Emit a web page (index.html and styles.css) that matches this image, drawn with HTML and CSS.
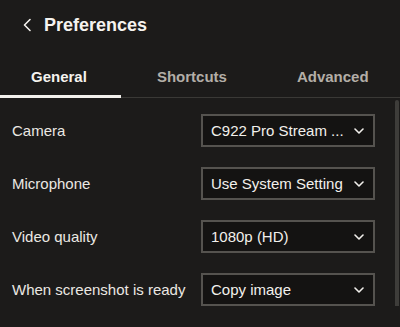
FILE: index.html
```html
<!DOCTYPE html>
<html lang="en">
<head>
  <meta charset="UTF-8" />
  <meta name="viewport" content="width=device-width, initial-scale=1.0" />
  <title>Preferences</title>
  <link rel="stylesheet" href="styles.css">
</head>
<body>
  <div class="header">
    <button class="back-btn" title="Back">
      <svg width="10" height="14" viewBox="0 0 10 14"><path d="M8 1.5 L2.5 7 L8 12.5" fill="none" stroke="#f2f0ec" stroke-width="1.6" stroke-linecap="round" stroke-linejoin="round"/></svg>
    </button>
    <h1>Preferences</h1>
  </div>

  <div class="tabs">
    <div class="tab active">General</div>
    <div class="tab">Shortcuts</div>
    <div class="tab">Advanced</div>
  </div>

  <div class="content">
    <div class="scroll-thumb"></div>

    <div class="row">
      <span class="label">Camera</span>
      <div class="select">
        <span class="value">C922 Pro Stream ...</span>
        <svg class="caret" width="10" height="6" viewBox="0 0 10 6"><path d="M1 1 L5 5 L9 1" fill="none" stroke="#f2f0ec" stroke-width="1.6" stroke-linecap="round" stroke-linejoin="round"/></svg>
      </div>
    </div>

    <div class="row">
      <span class="label">Microphone</span>
      <div class="select">
        <span class="value">Use System Setting</span>
        <svg class="caret" width="10" height="6" viewBox="0 0 10 6"><path d="M1 1 L5 5 L9 1" fill="none" stroke="#f2f0ec" stroke-width="1.6" stroke-linecap="round" stroke-linejoin="round"/></svg>
      </div>
    </div>

    <div class="row">
      <span class="label">Video quality</span>
      <div class="select">
        <span class="value">1080p (HD)</span>
        <svg class="caret" width="10" height="6" viewBox="0 0 10 6"><path d="M1 1 L5 5 L9 1" fill="none" stroke="#f2f0ec" stroke-width="1.6" stroke-linecap="round" stroke-linejoin="round"/></svg>
      </div>
    </div>

    <div class="row">
      <span class="label">When screenshot is ready</span>
      <div class="select">
        <span class="value">Copy image</span>
        <svg class="caret" width="10" height="6" viewBox="0 0 10 6"><path d="M1 1 L5 5 L9 1" fill="none" stroke="#f2f0ec" stroke-width="1.6" stroke-linecap="round" stroke-linejoin="round"/></svg>
      </div>
    </div>
  </div>
</body>
</html>
```

FILE: styles.css
```css
* {
  box-sizing: border-box;
}

body {
  font-family: 'Liberation Sans', Arial, sans-serif;
  background-color: #1c1b1a;
  color: #ebe8e3;
  margin: 0;
  padding: 0;
  overflow: hidden;
}

.header {
  display: flex;
  align-items: center;
  height: 50px;
  padding-left: 18px;
}

.back-btn {
  display: flex;
  align-items: center;
  background: none;
  border: none;
  padding: 0 4px;
  margin-right: 8px;
  cursor: pointer;
}

.header h1 {
  margin: 0;
  font-size: 18px;
  font-weight: 700;
  line-height: 24px;
  color: #f5f3ef;
}

.tabs {
  display: flex;
  border-bottom: 1px solid #3a3936;
  gap: 5px;
}

.tab {
  padding: 17px 34px 8px 31px;
  font-size: 15px;
  font-weight: 700;
  line-height: 20px;
  color: #b3aea7;
  border-bottom: 3px solid transparent;
  margin-bottom: -1px;
  cursor: pointer;
}

.tab.active {
  color: #f5f3ef;
  border-bottom-color: #f2f0ec;
}

.content {
  position: relative;
  padding: 16px 25px 0 12px;
  display: flex;
  flex-direction: column;
  gap: 20px;
}

.scroll-thumb {
  position: absolute;
  top: 2px;
  right: 1px;
  width: 4px;
  height: 227px;
  border-radius: 2px 2px 0 0;
  background-color: #3e3d3a;
}

.row {
  display: flex;
  align-items: center;
  justify-content: space-between;
  height: 33px;
}

.label {
  font-size: 15px;
  line-height: 20px;
}

.select {
  display: flex;
  align-items: center;
  justify-content: space-between;
  width: 174px;
  height: 33px;
  padding: 0 9px 0 8px;
  background-color: #141312;
  border: 2px solid #55534f;
  font-size: 15px;
  color: #f2f0ec;
  cursor: pointer;
}

.value {
  white-space: nowrap;
}

.caret {
  flex-shrink: 0;
}
```
